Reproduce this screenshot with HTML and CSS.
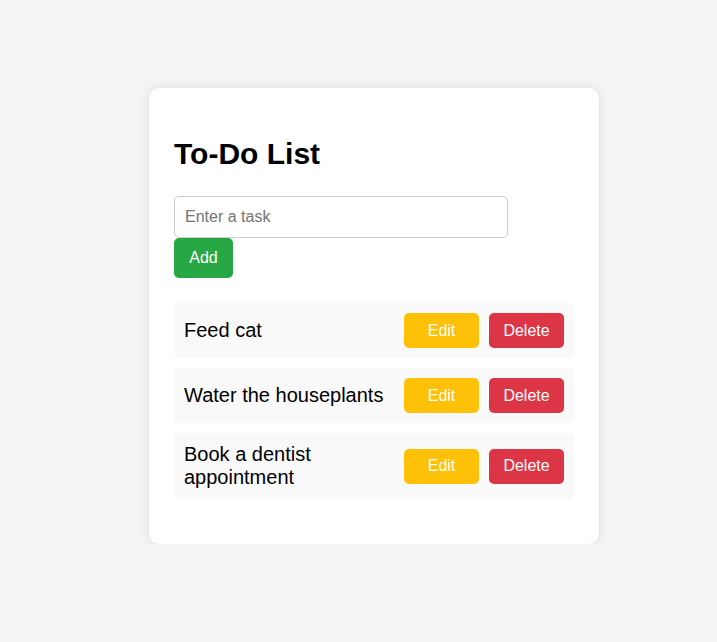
FILE: index.html
```html
<!DOCTYPE html>
<html lang="en">
<head>
<meta charset="utf-8">
<title>To-Do List</title>
<link rel="stylesheet" href="styles.css">
</head>
<body>
<div class="page">
  <div class="card">
    <h1 class="title">To-Do List</h1>
    <input class="task-input" type="text" placeholder="Enter a task">
    <button class="btn btn-add">Add</button>
    <ul class="list">
      <li class="item"><span class="item-text">Feed cat</span><button class="btn btn-edit">Edit</button><button class="btn btn-delete">Delete</button></li>
      <li class="item"><span class="item-text">Water the houseplants</span><button class="btn btn-edit">Edit</button><button class="btn btn-delete">Delete</button></li>
      <li class="item"><span class="item-text">Book a dentist appointment</span><button class="btn btn-edit">Edit</button><button class="btn btn-delete">Delete</button></li>
    </ul>
  </div>
</div>
</body>
</html>
```
FILE: styles.css
```css
html, body {
  margin: 0;
  padding: 0;
  background: #f4f4f4;
  font-family: "Liberation Sans", Arial, sans-serif;
}
.page {
  padding: 88px 0 0 149px;
}
.card {
  box-sizing: border-box;
  width: 450px;
  background: #fff;
  border-radius: 10px;
  box-shadow: 0 0 10px rgba(0, 0, 0, 0.1);
  padding: 25px 25px 25px;
}
.title {
  font-size: 30px;
  font-weight: bold;
  color: #000;
  margin: 24px 0 25px;
  line-height: normal;
}
.task-input {
  display: block;
  box-sizing: border-box;
  width: 334px;
  height: 42px;
  margin: 0;
  padding: 0 10px;
  font-family: inherit;
  font-size: 16px;
  border: 1px solid #ccc;
  border-radius: 5px;
  outline: none;
}
.task-input::placeholder {
  color: #757575;
}
.btn {
  font-family: inherit;
  font-size: 16px;
  color: #fff;
  border: none;
  border-radius: 5px;
  cursor: pointer;
  padding: 0;
}
.btn-add {
  display: block;
  width: 59px;
  height: 40px;
  background: #28a745;
}
.list {
  list-style: none;
  margin: 25px 0 20px;
  padding: 0;
}
.item {
  display: flex;
  align-items: center;
  background: #f9f9f9;
  border-radius: 5px;
  padding: 10px;
  margin-bottom: 10px;
  font-size: 20px;
  color: #000;
}
.item:last-child {
  margin-bottom: 0;
}
.item-text {
  flex: 1;
  min-width: 0;
}
.btn-edit, .btn-delete {
  width: 75px;
  height: 35px;
  margin-left: 10px;
  flex: none;
}
.btn-edit {
  background: #ffc107;
}
.btn-delete {
  background: #dc3545;
}
```
